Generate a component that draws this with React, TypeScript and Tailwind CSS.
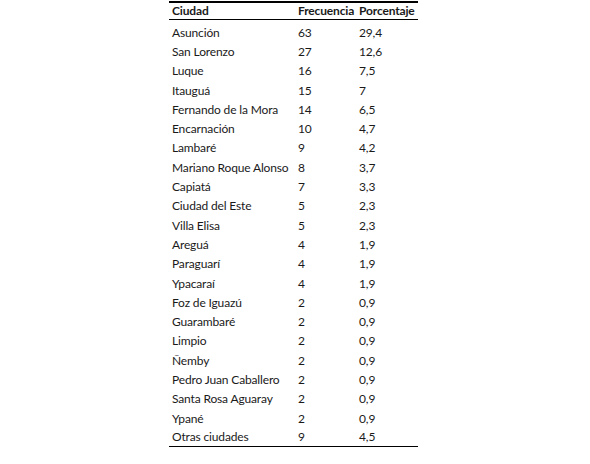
const rows: [string, string, string][] = [
  ["Asunción", "63", "29,4"],
  ["San Lorenzo", "27", "12,6"],
  ["Luque", "16", "7,5"],
  ["Itauguá", "15", "7"],
  ["Fernando de la Mora", "14", "6,5"],
  ["Encarnación", "10", "4,7"],
  ["Lambaré", "9", "4,2"],
  ["Mariano Roque Alonso", "8", "3,7"],
  ["Capiatá", "7", "3,3"],
  ["Ciudad del Este", "5", "2,3"],
  ["Villa Elisa", "5", "2,3"],
  ["Areguá", "4", "1,9"],
  ["Paraguarí", "4", "1,9"],
  ["Ypacaraí", "4", "1,9"],
  ["Foz de Iguazú", "2", "0,9"],
  ["Guarambaré", "2", "0,9"],
  ["Limpio", "2", "0,9"],
  ["Ñemby", "2", "0,9"],
  ["Pedro Juan Caballero", "2", "0,9"],
  ["Santa Rosa Aguaray", "2", "0,9"],
  ["Ypané", "2", "0,9"],
  ["Otras ciudades", "9", "4,5"],
];

export default function App() {
  return (
    <div className="w-[590px] h-[464px] bg-white pt-px">
      <div
        className="ml-[169px] w-[249px] text-[12px] tracking-[-0.15px] text-[#1a1a1a] leading-none whitespace-nowrap"
        style={{ fontFamily: 'Lato, sans-serif' }}
      >
        <div className="grid grid-cols-[129px_61px_59px] h-[19px] items-center border-t-2 border-b border-black font-bold">
          <span className="pl-[3px]">Ciudad</span>
          <span>Frecuencia</span>
          <span>Porcentaje</span>
        </div>
        <div className="pt-[3px] border-b-[1.5px] border-black">
          {rows.map(([city, freq, pct], i) => (
            <div
              key={city}
              className={`grid grid-cols-[129px_61px_59px] items-center ${i === rows.length - 1 ? "h-[17.5px]" : "h-[19.3px]"}`}
            >
              <span className="pl-[3px]">{city}</span>
              <span>{freq}</span>
              <span>{pct}</span>
            </div>
          ))}
        </div>
      </div>
    </div>
  );
}
